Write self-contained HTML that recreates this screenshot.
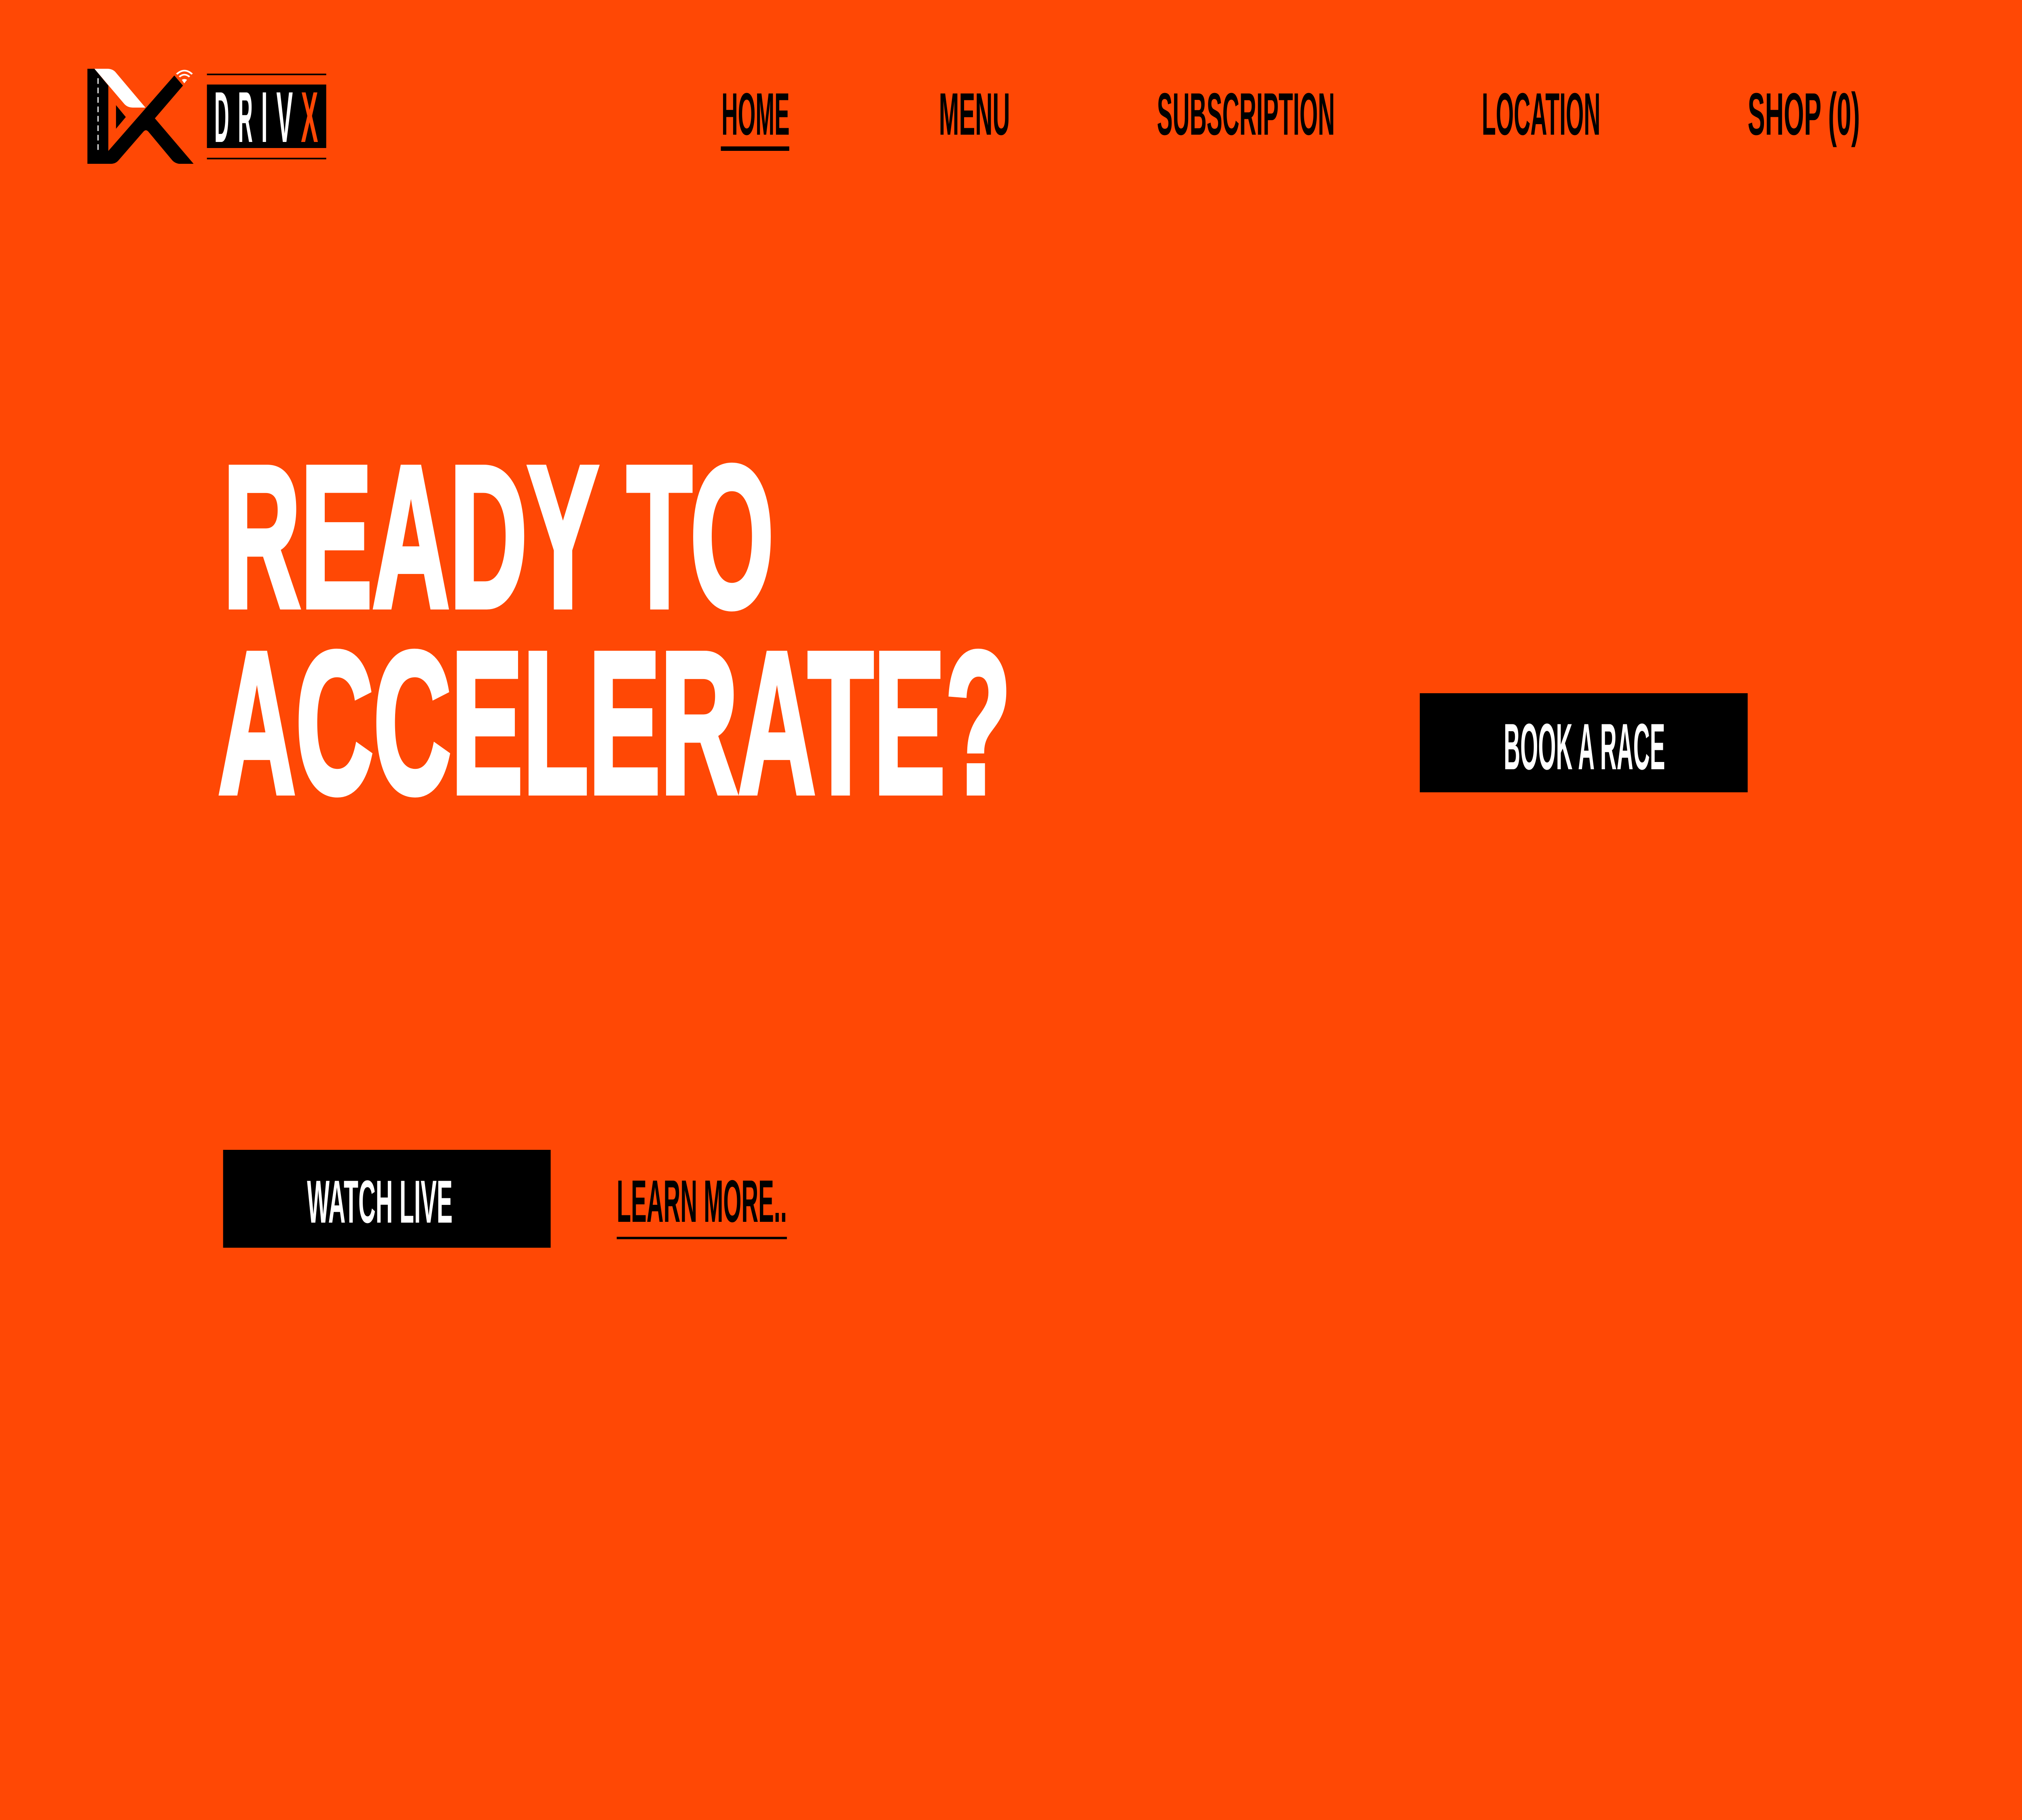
<!DOCTYPE html>
<html><head><meta charset="utf-8"><style>
html,body{margin:0;padding:0;background:#FF4805;width:100%;height:100%;overflow:hidden;}
svg{display:block;width:100vw;height:100vh}
</style></head><body>
<svg viewBox="0 0 6000 4500" preserveAspectRatio="none" xmlns="http://www.w3.org/2000/svg">
<rect width="6000" height="4500" fill="#FF4805"/>
<g transform="translate(240,140) scale(0.4847,0.3333)">
  <path d="M40,90 L83,90 L168,215 L168,700 L572,140 L625,215 L453,458 L690,795 L600,795 Q575,790 560,770 L412,555 Q398,538 384,555 L230,770 Q212,795 185,795 L40,795 Z" fill="#000"/>
  <path d="M83,90 L165,90 Q195,92 212,115 L395,378 L318,378 Q285,378 265,350 Z" fill="#fff"/>
  <path d="M215,360 L275,448 L215,535 Z" fill="#000"/>
  <line x1="105" y1="160" x2="105" y2="705" stroke="#fff" stroke-width="7" stroke-dasharray="42,28"/>
  <path d="M618,172 L633,198 L650,172 Q634,160 618,172 Z" fill="#fff"/>
  <path d="M603,150 Q634,118 665,150" fill="none" stroke="#fff" stroke-width="12"/>
  <path d="M587,130 Q634,78 681,130" fill="none" stroke="#fff" stroke-width="12"/>
</g>
<rect x="614" y="182" width="354" height="4" fill="#000"/>
<rect x="614" y="390" width="354" height="4" fill="#000"/>
<rect x="614" y="209" width="354" height="157" fill="#000"/>
<g font-family="Liberation Sans Narrow, Liberation Sans, sans-serif" font-weight="bold" font-size="178">
<text x="636" y="351" fill="#fff" textLength="44" lengthAdjust="spacingAndGlyphs">D</text>
<text x="706" y="351" fill="#fff" textLength="44" lengthAdjust="spacingAndGlyphs">R</text>
<text x="775" y="351" fill="#fff" textLength="19" lengthAdjust="spacingAndGlyphs">I</text>
<text x="820" y="351" fill="#fff" textLength="49" lengthAdjust="spacingAndGlyphs">V</text>
<text x="893" y="351" fill="#FF4805" textLength="51" lengthAdjust="spacingAndGlyphs">X</text>
</g>
<g font-family="Liberation Sans Narrow, Liberation Sans, sans-serif" font-weight="bold" font-size="148" fill="#000">
<text x="2141" y="333" textLength="202" lengthAdjust="spacingAndGlyphs">HOME</text>
<text x="2786" y="333" textLength="211" lengthAdjust="spacingAndGlyphs">MENU</text>
<text x="3433" y="333" textLength="528" lengthAdjust="spacingAndGlyphs">SUBSCRIPTION</text>
<text x="4397" y="333" textLength="352" lengthAdjust="spacingAndGlyphs">LOCATION</text>
<text x="5186" y="333" textLength="333" lengthAdjust="spacingAndGlyphs">SHOP (0)</text>
</g>
<rect x="2139" y="362" width="203" height="11" fill="#000"/>
<g font-family="Liberation Sans Narrow, Liberation Sans, sans-serif" font-weight="bold" font-size="500" fill="#fff" stroke="#fff" stroke-width="14">
<text x="662" y="1500" textLength="1634" lengthAdjust="spacingAndGlyphs">READY TO</text>
<text x="647" y="1960" textLength="2353" lengthAdjust="spacingAndGlyphs">ACCELERATE?</text>
</g>
<rect x="4213" y="1714" width="973" height="245" fill="#000"/>
<text x="4462" y="1902" font-family="Liberation Sans Narrow, Liberation Sans, sans-serif" font-weight="bold" font-size="162" fill="#fff" textLength="479" lengthAdjust="spacingAndGlyphs">BOOK A RACE</text>
<rect x="662" y="2843" width="972" height="242" fill="#000"/>
<text x="911" y="3023" font-family="Liberation Sans Narrow, Liberation Sans, sans-serif" font-weight="bold" font-size="150" fill="#fff" textLength="432" lengthAdjust="spacingAndGlyphs">WATCH LIVE</text>
<text x="1830" y="3021" font-family="Liberation Sans Narrow, Liberation Sans, sans-serif" font-weight="bold" font-size="148" fill="#000" textLength="505" lengthAdjust="spacingAndGlyphs">LEARN MORE..</text>
<rect x="1830" y="3058" width="505" height="6" fill="#000"/>
</svg>
</body></html>
